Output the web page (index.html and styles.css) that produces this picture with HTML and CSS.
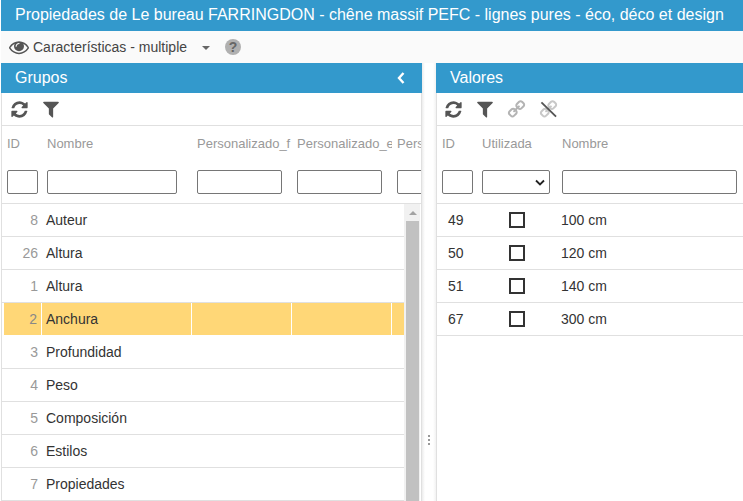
FILE: index.html
```html
<!DOCTYPE html>
<html lang="es">
<head>
<meta charset="utf-8">
<title>Propiedades</title>
<link rel="stylesheet" href="styles.css">
</head>
<body>
<svg class="defs" width="0" height="0">
  <symbol id="i-refresh" viewBox="0 0 1792 1792"><path d="M1639 1056q0 5-1 7-64 268-268 434.5t-478 166.5q-146 0-282.500-55t-243.500-157l-129 129q-19 19-45 19t-45-19-19-45v-448q0-26 19-45t45-19h448q26 0 45 19t19 45-19 45l-137 137q71 66 161 102t187 36q134 0 250-65t186-179q11-17 53-117 8-23 30-23h192q13 0 22.500 9.500t9.500 22.500zm25-800v448q0 26-19 45t-45 19h-448q-26 0-45-19t-19-45 19-45l138-138q-148-137-349-137-134 0-250 65t-186 179q-11 17-53 117-8 23-30 23h-199q-13 0-22.500-9.500t-9.500-22.500v-7q65-268 270-434.500t480-166.500q146 0 284 55.500t245 156.500l130-129q19-19 45-19t45 19 19 45z"/></symbol>
  <symbol id="i-filter" viewBox="0 0 1792 1792"><path d="M1595 295q17 41-14 70l-493 493v742q0 42-39 59-13 5-25 5-27 0-45-19l-256-256q-19-19-19-45v-486l-493-493q-31-29-14-70 17-39 59-39h1280q42 0 59 39z"/></symbol>
  <symbol id="i-link" viewBox="0 0 1792 1792"><path d="M1520 1216q0-40-28-68l-208-208q-28-28-68-28-42 0-72 32 3 3 19 18.500t21.500 21.500 15 19 13 25.500 3.500 27.500q0 40-28 68t-68 28q-15 0-27.500-3.500t-25.500-13-19-15-21.500-21.500-18.500-19q-33 31-33 73 0 40 28 68l206 207q27 27 68 27 40 0 68-26l147-146q28-28 28-67zm-703-705q0-40-28-68l-206-207q-28-28-68-28-39 0-68 27l-147 146q-28 28-28 67 0 40 28 68l208 208q27 27 68 27 42 0 72-31-3-3-19-18.500t-21.500-21.500-15-19-13-25.500-3.500-27.500q0-40 28-68t68-28q15 0 27.500 3.500t25.500 13 19 15 21.500 21.500 18.500 19q33-31 33-73zm895 705q0 120-85 203l-147 146q-83 83-203 83-121 0-204-85l-206-207q-83-83-83-203 0-123 88-209l-88-88q-86 88-208 88-120 0-204-84l-208-208q-84-84-84-204t85-203l147-146q83-83 203-83 121 0 204 85l206 207q83 83 83 203 0 123-88 209l88 88q86-88 208-88 120 0 204 84l208 208q84 84 84 204z"/></symbol>
</svg>

<header class="title-bar">Propiedades de Le bureau FARRINGDON - chêne massif PEFC - lignes pures - éco, déco et design</header>

<div class="view-bar">
  <svg class="eye" viewBox="0 0 1792 1792"><path d="M1664 960q-152-236-381-353 61 104 61 225 0 185-131.500 316.500t-316.500 131.500-316.500-131.500-131.500-316.500q0-121 61-225-229 117-381 353 133 205 333.500 326.500t434.500 121.500 434.500-121.500 333.500-326.500zm-720-384q0-20-14-34t-34-14q-125 0-214.500 89.500t-89.500 214.500q0 20 14 34t34 14 34-14 14-34q0-86 61-147t147-61q20 0 34-14t14-34zm848 384q0 34-20 69-140 230-376.500 368.500t-499.500 138.500-499.500-139-376.500-368q-20-35-20-69t20-69q140-229 376.500-368t499.500-139 499.500 139 376.500 368q20 35 20 69z"/></svg>
  <span class="view-name">Características - multiple</span>
  <span class="caret"></span>
  <span class="help">?</span>
</div>

<main class="panes">
  <section class="pane pane-left">
    <div class="pane-head"><span>Grupos</span>
      <svg class="chev" viewBox="0 0 10 14"><path d="M7.500 2 3 7l4.500 5" fill="none" stroke="#fff" stroke-width="2.400"/></svg>
    </div>
    <div class="tools">
      <svg class="tool i-ref"><use href="#i-refresh"/></svg>
      <svg class="tool i-fil"><use href="#i-filter"/></svg>
    </div>
    <div class="col-head g-left">
      <div class="th">ID</div><div class="th">Nombre</div><div class="th">Personalizado_f</div><div class="th">Personalizado_e</div><div class="th">Personalizado</div>
      <div class="tf"><input></div><div class="tf"><input></div><div class="tf"><input></div><div class="tf"><input></div><div class="tf"><input class="clip"></div>
    </div>
    <div class="body-wrap">
      <div class="rows">
        <div class="row g-left"><div class="num">8</div><div class="txt">Auteur</div><div></div><div></div><div></div></div>
        <div class="row g-left"><div class="num">26</div><div class="txt">Altura</div><div></div><div></div><div></div></div>
        <div class="row g-left"><div class="num">1</div><div class="txt">Altura</div><div></div><div></div><div></div></div>
        <div class="row g-left sel"><div class="num">2</div><div class="txt">Anchura</div><div></div><div></div><div></div></div>
        <div class="row g-left"><div class="num">3</div><div class="txt">Profundidad</div><div></div><div></div><div></div></div>
        <div class="row g-left"><div class="num">4</div><div class="txt">Peso</div><div></div><div></div><div></div></div>
        <div class="row g-left"><div class="num">5</div><div class="txt">Composición</div><div></div><div></div><div></div></div>
        <div class="row g-left"><div class="num">6</div><div class="txt">Estilos</div><div></div><div></div><div></div></div>
        <div class="row g-left"><div class="num">7</div><div class="txt">Propiedades</div><div></div><div></div><div></div></div>
      </div>
      <div class="scrollbar"><div class="sb-up"><span class="sb-arrow"></span></div><div class="sb-thumb"></div></div>
    </div>
  </section>

  <div class="splitter"><i></i><i></i><i></i></div>

  <section class="pane pane-right">
    <div class="pane-head"><span>Valores</span></div>
    <div class="tools tools-r">
      <svg class="tool i-ref"><use href="#i-refresh"/></svg>
      <svg class="tool i-fil"><use href="#i-filter"/></svg>
      <svg class="tool i-link"><use href="#i-link"/></svg>
      <span class="unlink"><svg class="tool i-link"><use href="#i-link"/></svg><svg class="slash" viewBox="0 0 18 18"><path d="M1.500 1.500 17 16.500" stroke="#555" stroke-width="2" fill="none"/></svg></span>
    </div>
    <div class="col-head g-right">
      <div class="th">ID</div><div class="th">Utilizada</div><div class="th">Nombre</div>
      <div class="tf"><input></div>
      <div class="tf"><div class="fake-select"><svg viewBox="0 0 10 7"><path d="M1 1.500 5 5.500l4-4" fill="none" stroke="#222" stroke-width="1.800"/></svg></div></div>
      <div class="tf"><input></div>
    </div>
    <div class="rows">
      <div class="row g-right"><div class="num-r">49</div><div class="chk"><span class="box"></span></div><div class="txt">100 cm</div></div>
      <div class="row g-right"><div class="num-r">50</div><div class="chk"><span class="box"></span></div><div class="txt">120 cm</div></div>
      <div class="row g-right"><div class="num-r">51</div><div class="chk"><span class="box"></span></div><div class="txt">140 cm</div></div>
      <div class="row g-right"><div class="num-r">67</div><div class="chk"><span class="box"></span></div><div class="txt">300 cm</div></div>
    </div>
  </section>
</main>
</body>
</html>
```
FILE: styles.css
```css
* { box-sizing: border-box; }
html, body { margin: 0; height: 501px; overflow: hidden; background: #fff; }
body { font-family: "Liberation Sans", Arial, sans-serif; font-size: 14px; color: #333; padding-left: 1px; }
.defs { display: block; height: 0; }
.title-bar { height: 31px; line-height: 30px; background: #3399cc; color: #fff; font-size: 16px; padding-left: 14px; white-space: nowrap; overflow: hidden; margin-right: -1px; }
.view-bar { height: 32px; display: flex; align-items: center; padding-left: 8px; background: #fafafa; margin-right: -1px; }
.eye { width: 20px; height: 20px; fill: #555; }
.view-name { margin-left: 4px; color: #444; }
.caret { margin-left: 15px; margin-top: 2px; border: 4px solid transparent; border-top: 4px solid #666; border-bottom: 0; }
.help { margin-left: 15px; width: 16px; height: 16px; border-radius: 50%; background: #b0b0b0; color: #666; font-size: 14px; font-weight: bold; line-height: 16px; text-align: center; }
.panes { display: flex; height: 438px; }
.pane { display: flex; flex-direction: column; overflow: hidden; min-width: 0; }
.pane-left { width: 421px; }
.pane-right { flex: 1; margin-right: -1px; }
.pane-head { height: 30px; flex: none; background: #3399cc; color: #fff; font-size: 16px; line-height: 28px; padding: 0 14px; display: flex; justify-content: space-between; align-items: center; }
.chev { width: 10px; height: 14px; margin-right: 2px; }
.tools { height: 33px; flex: none; display: flex; align-items: center; padding-left: 8px; border-bottom: 1px solid #e0e0e0; border-left: 1px solid #e0e0e0; }
.pane-left .tools, .pane-left .col-head, .body-wrap { border-right: 1px solid #e0e0e0; }
.tool { display: block; }
.i-ref { width: 19px; height: 19px; fill: #555; margin-right: 12px; }
.i-fil { width: 20px; height: 20px; fill: #555; margin-right: 12px; }
.i-link { width: 19px; height: 19px; fill: #b4b4b4; transform: scaleX(-1); margin-right: 13px; }
.unlink .i-link { margin-right: 0; fill: #c8c8c8; }
.tools-r { padding-left: 7px; }
.unlink { position: relative; display: block; width: 19px; height: 19px; }
.slash { position: absolute; left: 1px; top: 1px; width: 17px; height: 17px; }
.col-head { display: grid; grid-template-rows: 36px 41px; flex: none; border-bottom: 1px solid #e0e0e0; border-left: 1px solid #e0e0e0; }
.g-left { grid-template-columns: 40px 150px 100px 100px 1fr; }
.g-right { grid-template-columns: 39px 80px 1fr; }
.th { color: #999; font-size: 13px; padding: 10px 0 0 5px; white-space: nowrap; overflow: hidden; }
.tf { padding: 8px 5px 0 5px; overflow: hidden; }
.tf input, .fake-select { display: block; width: 100%; height: 24px; border: 1px solid #767676; border-radius: 2px; background: #fff; padding: 0; }
.g-left .tf:nth-child(6) { padding-right: 4px; }
.g-left .tf:nth-child(7) { padding-right: 15px; }
.g-left .tf:nth-child(8), .g-left .tf:nth-child(9) { padding-right: 10px; }
.g-left .tf:nth-child(10) { padding-right: 0; }
.g-right .tf:nth-child(4) { padding-right: 3px; }
.g-right .tf:nth-child(5) { padding-left: 6px; padding-right: 6px; }
.g-right .tf:nth-child(6) { padding-left: 6px; padding-right: 7px; }
.g-right .th:nth-child(2), .g-right .th:nth-child(3) { padding-left: 6px; }
.clip { width: 40px !important; }
.fake-select { display: flex; align-items: center; justify-content: flex-end; padding-right: 4px; }
.fake-select svg { width: 10px; height: 7px; }
.body-wrap { display: flex; flex: 1; min-height: 0; border-left: 1px solid #e0e0e0; }
.rows { flex: 1; min-width: 0; }
.pane-right .rows { border-left: 1px solid #e0e0e0; }
.pane-right .col-head { border-left: 1px solid #e0e0e0; }
.row { display: grid; height: 33px; border-bottom: 1px solid #e0e0e0; }
.row > div { line-height: 32px; }
.sel { border-bottom-color: #fff; }
.sel > div { background: #ffd777; border-right: 1px solid #fff; }
.sel > div:first-child { margin-left: 2px; }
.sel > div:last-child { border-right: 0; }
.num { text-align: right; color: #999; padding-right: 4px; }
.sel .num { color: #888; }
.num-r { padding-left: 10px; color: #333; }
.txt { padding-left: 4px; color: #333; }
.g-right .txt { padding-left: 5px; }
.g-right .num-r { padding-left: 11px; }
.chk { display: flex; align-items: center; justify-content: center; padding-left: 2px; }
.box { width: 16px; height: 16px; border: 2px solid #333; display: block; }
.scrollbar { width: 17px; flex: none; display: flex; flex-direction: column; background: linear-gradient(#f1f1f1, #f1f1f1) no-repeat 0 0 / 16px 100%; padding: 0 2px 0 2px; }
.sb-up { height: 17px; display: flex; align-items: center; justify-content: center; }
.sb-arrow { border: 4px solid transparent; border-bottom: 4px solid #a3a3a3; border-top: 0; }
.sb-thumb { flex: 1; background: #c1c1c1; }
.splitter { width: 14px; flex: none; display: flex; flex-direction: column; align-items: center; gap: 2px; padding-top: 372px; background: linear-gradient(to right, #ececec, #fff 3px, #fff 11px, #f2f2f2); }
.splitter i { display: block; width: 2px; height: 2px; background: #999; }
```
